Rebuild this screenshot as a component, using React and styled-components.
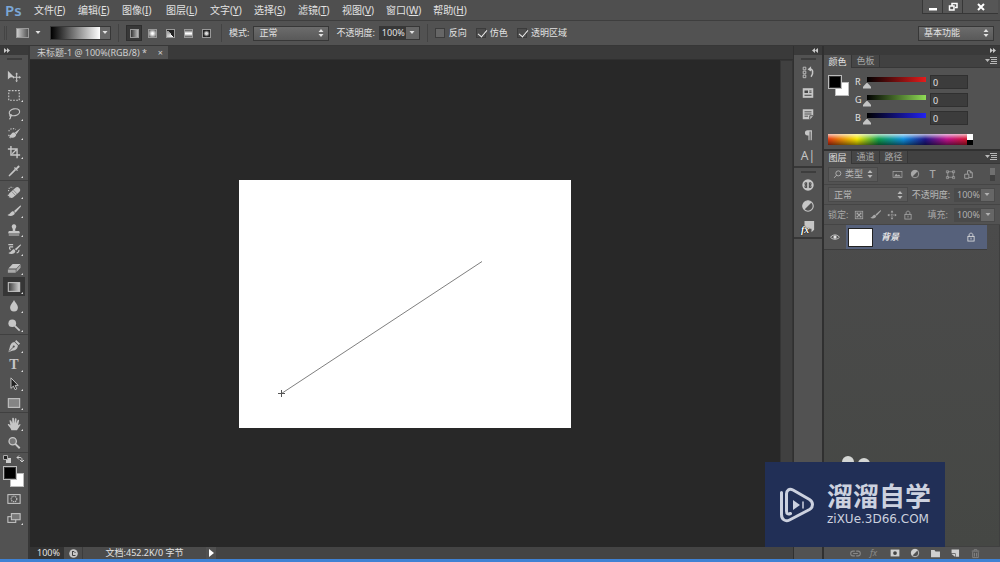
import { useState } from 'react'
import styled, { createGlobalStyle, css } from 'styled-components'

const color = {
	panel: '#525252',
	bar: '#4f4f4f',
	dark: '#3a3a3a',
	edge: '#373737',
	canvas: '#282828',
	text: '#e2e2e2',
	muted: '#a8a8a8',
	icon: '#c6c6c6',
}

const font = `"Noto Sans", "Noto Sans CJK SC", sans-serif`

const menus = [
	['文件', 'F'],
	['编辑', 'E'],
	['图像', 'I'],
	['图层', 'L'],
	['文字', 'Y'],
	['选择', 'S'],
	['滤镜', 'T'],
	['视图', 'V'],
	['窗口', 'W'],
	['帮助', 'H'],
]

const Svg = ({ children, size = 16, ...rest }) => (
	<svg
		width={size}
		height={size}
		viewBox='0 0 16 16'
		fill='none'
		stroke='currentColor'
		strokeWidth='1.3'
		aria-hidden='true'
		{...rest}>
		{children}
	</svg>
)

const solid = { fill: 'currentColor', stroke: 'none' }

const drawings = {
	move: (
		<>
			<path d='M1 2v10l2.600-2.400L8 9z' {...solid} />
			<path d='M11 5.5v8M7 9.5h8' strokeWidth='1.200' />
			<path d='M11 4l1.6 2H9.4zM11 15l1.6-2H9.4zM16 9.500l-2-1.600v3.200zM6 9.500l2-1.600v3.200z' {...solid} />
		</>
	),
	marquee: <rect x='2' y='3' width='12' height='11' strokeDasharray='2 1.500' />,
	lasso: (
		<>
			<ellipse cx='8.500' cy='6' rx='6' ry='3.900' transform='rotate(-12 8.500 6)' />
			<path d='M4.500 8.500c-2 .500-1.500 2.500 0 2s1-2-.500-1.500M4 10.500c.500 1.500 0 2.500-1.200 3.500' />
		</>
	),
	quickSelect: (
		<>
			<path d='M2 6c1-3 5-4 8-2M2 10c0 2 1 3.500 3 4' strokeDasharray='1.500 1.500' />
			<path d='M15.500 2.500l-6.500 5 1.700 2zM8.500 7.500c-3.500-.500-3 2.500-6 3.500 1.500 3.500 8 3 8-1.200z' {...solid} />
		</>
	),
	crop: <path d='M4.500 1v10.500H15M1 4.500h10.500V15M6 10l5-5' strokeWidth='1.600' />,
	eyedropper: (
		<>
			<path d='M10 6.500l-6 6-1.800 1.300L3.500 12l6-6' />
			<path d='M8 4.500l1-1 1.300 1.200L12.500 2c1-.800 2.500.700 1.700 1.700L11.500 6l1 1-1 1z' {...solid} />
		</>
	),
	heal: (
		<>
			<path d='M2 7c-1-3 2-5.500 5-4M1.500 11c0 1.500.500 2.500 1.500 3' strokeDasharray='1.300 1.300' />
			<rect x='1' y='5.300' width='15' height='6.400' rx='3' transform='rotate(-42 8.500 8.500)' {...solid} />
			<path d='M7.300 5.800l4 4.200M5.500 7.500l4 4.200' stroke='#777' strokeWidth='.8' />
		</>
	),
	brush: <path d='M15.500 1.500L8 8l1.700 1.900L16 2.800zM7.200 8.300c-2.900-.200-3 3.200-6.700 4.300 2.700 2.100 8.300 1.200 8.500-2.500z' {...solid} />,
	stamp: <path d='M8 1.500a2.600 2.600 0 0 0-2.200 4C6.600 6.700 6.800 7.500 6.500 9H3c-1 0-1.500.700-1.500 1.500V12h13v-1.500C14.500 9.700 14 9 13 9H9.500c-.300-1.500-.100-2.300.700-3.500A2.600 2.600 0 0 0 8 1.500zM2 13h12v1.200H2z' {...solid} />,
	history: (
		<>
			<path d='M1.500 3h5.500M7 5.500H3M3 5.500c-.500 1.500 0 2.500 1 3.500' />
			<path d='M15.500 2.500L9 8l1.500 1.700L16 3.700zM8.200 8.200c-2.600-.200-2.700 3-6.700 4.300 2.500 2.100 8 1.200 8.100-2.300z' {...solid} />
			<path d='M11 12.500c2-.500 3-2 2.500-3.500' />
		</>
	),
	eraser: (
		<>
			<path d='M6.500 3.500h9l-4.800 5.200H1.500z' {...solid} />
			<path d='M1 9.600h9v3.700H1zM10.800 9.400l4.700-5v3.300l-4.700 5.200z' {...solid} opacity='.75' />
		</>
	),
	gradient: (
		<>
			<defs>
				<linearGradient id='tool-ramp'>
					<stop offset='0' stopColor='#3a3a3a' />
					<stop offset='1' stopColor='#d0d0d0' />
				</linearGradient>
			</defs>
			<rect x='1.500' y='3' width='13' height='10' fill='url(#tool-ramp)' strokeWidth='1.200' />
		</>
	),
	blur: <path d='M8 1c1 2.700 4.500 5.300 4.500 8.500a4.500 4.800 0 0 1-9 0C3.500 6.300 7 3.700 8 1z' {...solid} />,
	dodge: (
		<>
			<circle cx='6' cy='6' r='4.400' {...solid} />
			<path d='M9 9l5.500 5.500' strokeWidth='2' />
		</>
	),
	pen: (
		<>
			<path d='M10.500 1l4.500 4.500-1.800 1.300-4-4zM8.500 3.500L12.500 7.500c-.500 3.500-2 5.500-6.500 6L1.500 15 3 10C3.700 6.200 5.200 4 8.500 3.500z' {...solid} />
			<path d='M2 14.500L7.500 9' stroke='#525252' strokeWidth='1' />
			<circle cx='7.700' cy='8.600' r='1.200' fill='#525252' stroke='none' />
		</>
	),
	select: <path d='M4.500 1v12l2.800-2.600L9.300 14.500l1.900-.900-1.900-4h3.500z' fill='#222' strokeWidth='1.100' />,
	shape: <rect x='1.500' y='3' width='13' height='10' fill='#858585' strokeWidth='1.200' />,
	hand: <path d='M5 15c-.500-2-3-4.500-4.200-6.500 1-.900 1.900-.300 3.200 1.200L2.800 4c1-.800 1.900-.300 2.200.600L6 7.500V1.500c.800-.900 1.700-.700 1.900.200L8.200 7l.900-5.300c.900-.800 1.800-.300 1.800.700L10.600 7.500l1.600-4c.900-.600 1.700 0 1.600.900l-1.200 5.100c1.200-1 2.200-1.500 3-.700-1.600 1.700-2.500 4.300-4.200 6.200z' {...solid} />,
	zoom: (
		<>
			<circle cx='6.500' cy='6' r='4.200' fill='#777' strokeWidth='1.500' />
			<path d='M9.500 9l5 5' strokeWidth='2.200' />
		</>
	),
	mask: (
		<>
			<rect x='1' y='3' width='14' height='10' strokeWidth='1.200' />
			<circle cx='8' cy='8' r='3.200' strokeDasharray='1.500 .8' />
		</>
	),
	screen: (
		<>
			<rect x='1' y='6.500' width='9' height='6.500' strokeWidth='1.200' />
			<rect x='5' y='3' width='10' height='7' fill='#777' strokeWidth='1.200' />
		</>
	),
	historyPanel: (
		<>
			<path d='M2.500 2.500h3v3h-3zM2.500 7h3v3h-3zM2.500 11.500h3v3h-3z' strokeWidth='1' />
			<path d='M9 4.500c5-1 5.500 5 2.500 9' strokeWidth='1.800' />
			<path d='M7.500 5l4-3.500v6z' {...solid} />
		</>
	),
	properties: (
		<>
			<rect x='2' y='2.500' width='12' height='11' {...solid} />
			<path d='M4 5h4v3H4zM9.500 5H12v1.200H9.500zM9.500 7H12v1H9.500zM4 10h8v1H4z' fill='#444' stroke='none' />
		</>
	),
	notes: (
		<>
			<path d='M2 2.500h12v7.500l-3.500 4H2z' {...solid} />
			<path d='M4 5.500h8M4 8h8M4 10.500h4' stroke='#444' strokeWidth='1' />
			<path d='M10 14v-4h4' stroke='#444' strokeWidth='1' />
		</>
	),
	paragraph: <path d='M12.500 2.500H7.500a3 3 0 0 0 0 6H8.500v5.500h1.300v-10h1.200V14h1.300z' {...solid} />,
	library: (
		<>
			<circle cx='8' cy='8' r='6.500' {...solid} />
			<path d='M6 5.500h-1.500v2H6zM11.500 5.500H10v2h1.500zM6 8.800h-1.500v2H6zM11.500 8.800H10v2h1.500zM6.500 5v6.500M9.500 5v6.500' stroke='#444' strokeWidth='1' />
		</>
	),
	adjust: (
		<>
			<circle cx='8' cy='8' r='6' />
			<path d='M12.300 3.700A6 6 0 0 0 3.700 12.300z' {...solid} />
		</>
	),
	styles: <path d='M4 1h11v10L12 14v-4H4z' {...solid} />,
	image: (
		<>
			<rect x='1.500' y='3.500' width='13' height='9' strokeWidth='1' />
			<path d='M3 11l3-4 2.500 2.500L10 8l3 3z' {...solid} />
		</>
	),
	transform: <path d='M4 4h8v8H4zM2 2.500h3v3H2zM11 2.500h3v3h-3zM2 11h3v3H2zM11 11h3v3h-3z' strokeWidth='1' />,
	smart: <path d='M2.500 7.500h6v6h-6zM6.500 7V2.500h4l3 3v7H9M10.500 2.500v3h3' />,
	pixels: (
		<>
			<rect x='2' y='2' width='12' height='12' strokeWidth='1.200' />
			<path d='M4 4h3v3H4zM9 4h3v3H9zM6.500 6.500h3v3h-3zM4 9h3v3H4zM9 9h3v3H9z' {...solid} />
		</>
	),
	position: (
		<>
			<path d='M8 3v10M3 8h10' strokeDasharray='2 1' />
			<path d='M8 .500l2.200 3H5.800zM8 15.500l2.200-3H5.800zM15.500 8l-3-2.200v4.400zM.500 8l3-2.200v4.400z' {...solid} />
		</>
	),
	lock: (
		<>
			<rect x='3' y='7' width='10' height='7.500' />
			<path d='M5 7V4.500c0-3.500 6-3.500 6 0V7M8 9v3' />
		</>
	),
	eye: (
		<>
			<path d='M1 8.500C3.500 3.500 12.500 3.500 15 8.500 12 12.500 4 12.500 1 8.500z' />
			<circle cx='8' cy='8' r='2.600' {...solid} />
		</>
	),
	search: (
		<>
			<circle cx='9.500' cy='6' r='4.500' strokeWidth='1.500' />
			<path d='M6.500 9l-4.500 5' strokeWidth='1.500' />
		</>
	),
	link: <path d='M7 4.500H4.500a3.500 3.500 0 0 0 0 7H7M9 4.500h2.500a3.500 3.500 0 0 1 0 7H9M4.500 8h7' strokeWidth='1.600' />,
	addMask: (
		<>
			<rect x='1' y='2.500' width='14' height='11' {...solid} />
			<circle cx='8' cy='8' r='3' fill='#444' stroke='none' />
		</>
	),
	folder: <path d='M1.500 3h5l1.500 2h6.500v8.500h-13z' {...solid} />,
	newLayer: (
		<>
			<path d='M2.500 2.500h12V14H9V8.500H2.500z' {...solid} />
			<path d='M2.500 9.500H8V14z' {...solid} />
		</>
	),
	trash: <path d='M2.500 4.500h11M6 4V2.500h4V4M4 6v8h8V6M6.500 7v5.500M9.500 7v5.500' />,
}

const Icon = ({ name, size }) => <Svg size={size}>{drawings[name]}</Svg>

const toolGroups = [
	[
		['移动', 'move', true],
		['选框', 'marquee'],
		['套索', 'lasso'],
		['快速选择', 'quickSelect'],
		['裁剪', 'crop'],
		['吸管', 'eyedropper'],
	],
	[
		['修复画笔', 'heal'],
		['画笔', 'brush'],
		['图章', 'stamp'],
		['历史画笔', 'history'],
		['橡皮擦', 'eraser'],
		['渐变', 'gradient'],
		['模糊', 'blur'],
		['减淡', 'dodge'],
	],
	[
		['钢笔', 'pen'],
		['文字', 'type'],
		['路径选择', 'select'],
		['矩形', 'shape'],
	],
	[
		['抓手', 'hand'],
		['缩放', 'zoom', true],
	],
]

const gradientTypes = [
	['线性', 'linear-gradient(90deg, #333, #bbb)'],
	['径向', 'radial-gradient(#fff 15%, #555)'],
	['角度', 'conic-gradient(from 135deg, #fff, #999 50%, #222 50%, #222)'],
	['对称', 'linear-gradient(#555, #fff 45%, #fff 55%, #555)'],
	['菱形', 'radial-gradient(#ddd 20%, #222 65%)'],
]

const channels = [
	['R', '#e51c1c'],
	['G', '#8fdc55'],
	['B', '#2222f0'],
]

const UpDown = () => (
	<svg width='6' height='8' viewBox='0 0 6 8' aria-hidden='true'>
		<path d='M3 0l2.500 3h-5zM3 8l2.500-3h-5z' fill='currentColor' />
	</svg>
)

const Caret = () => (
	<svg width='6' height='4' viewBox='0 0 6 4' aria-hidden='true'>
		<path d='M.500 0h5L3 3z' fill='currentColor' />
	</svg>
)

const DropDown = ({ label, value, width, dim, icon }) => (
	<SelectBox $width={width} $dim={dim}>
		{icon}
		<select aria-label={label} defaultValue={value}>
			<option>{value}</option>
		</select>
		<UpDown />
	</SelectBox>
)

const Percent = ({ id, dim }) => (
	<PercentBox $dim={dim}>
		<input id={id} defaultValue='100%' />
		<button type='button' aria-label='调整'>
			<Caret />
		</button>
	</PercentBox>
)

const PanelMenu = () => (
	<MenuButton type='button' aria-label='面板菜单'>
		<svg width='12' height='8' viewBox='0 0 12 8' aria-hidden='true'>
			<path d='M0 2h5L2.500 5zM5 0h7v1H5zM6 2h6v1H6zM6 4h6v1H6zM5 6h7v1H5z' fill='currentColor' />
		</svg>
	</MenuButton>
)

const TopBar = () => (
	<MenuBar>
		<Logo>Ps</Logo>
		<MenuList>
			{menus.map(([name, key]) => (
				<button type='button' key={key}>
					{name}(<u>{key}</u>)
				</button>
			))}
		</MenuList>
		<WindowButtons>
			<button type='button' aria-label='最小化'>
				<svg width='10' height='10' viewBox='0 0 10 10'>
					<path d='M1 6h8v2.500H1z' fill='#fff' />
				</svg>
			</button>
			<button type='button' aria-label='还原'>
				<svg width='10' height='10' viewBox='0 0 10 10' fill='none' stroke='#fff' strokeWidth='1.500'>
					<path d='M4 3.500V1.500h5v4H7M1.500 4h4.500v4H1.500z' />
				</svg>
			</button>
			<button type='button' aria-label='关闭'>
				<svg width='10' height='10' viewBox='0 0 10 10' stroke='#fff' strokeWidth='2'>
					<path d='M2 2l6 6M8 2L2 8' />
				</svg>
			</button>
		</WindowButtons>
	</MenuBar>
)

const Options = () => {
	const [type, setType] = useState('线性')

	return (
		<OptionsBar>
			<Grip />
			<PresetButton type='button' aria-label='工具预设'>
				<i />
				<Caret />
			</PresetButton>
			<RampPicker>
				<span />
				<button type='button' aria-label='渐变拾色器'>
					<Caret />
				</button>
			</RampPicker>
			<Divider />
			<TypeList>
				{gradientTypes.map(([name, fill]) => (
					<TypeButton
						type='button'
						key={name}
						aria-label={name}
						$active={type === name}
						$fill={fill}
						onClick={() => setType(name)}>
						<i />
					</TypeButton>
				))}
			</TypeList>
			<Divider />
			<Field>
				模式:
				<DropDown label='模式' value='正常' width={76} />
			</Field>
			<Field>
				<label htmlFor='opacity'>不透明度:</label>
				<Percent id='opacity' />
			</Field>
			<Divider />
			<CheckList>
				<Check>
					<input type='checkbox' />
					反向
				</Check>
				<Check>
					<input type='checkbox' defaultChecked />
					仿色
				</Check>
				<Check>
					<input type='checkbox' defaultChecked />
					透明区域
				</Check>
			</CheckList>
			<Workspace>
				<DropDown label='工作区' value='基本功能' width={76} />
			</Workspace>
		</OptionsBar>
	)
}

const Tools = () => {
	const [tool, setTool] = useState('gradient')

	return (
		<ToolColumn>
			<Collapse>
				<Chevrons right />
			</Collapse>
			<ToolBox>
				<Handle />
				{toolGroups.map((group) => (
					<ToolGroup key={group[0][1]}>
						{group.map(([label, name, single]) => (
							<ToolButton
								type='button'
								key={name}
								aria-label={label}
								$active={tool === name}
								$single={single}
								onClick={() => setTool(name)}>
								{name === 'type' ? <Letter>T</Letter> : <Icon name={name} size={14} />}
							</ToolButton>
						))}
					</ToolGroup>
				))}
				<SwatchTools>
					<svg width='8' height='8' viewBox='0 0 8 8'>
						<path d='M3 3h5v5H3z' fill='#ccc' />
						<path d='M.500.500h4v4h-4z' fill='#222' stroke='#aaa' />
					</svg>
					<svg width='8' height='8' viewBox='0 0 8 8' fill='none' stroke='#ccc'>
						<path d='M1 2.500h3c2 0 2 1 2 4M3 .500l-2 2 2 2M4 5l2 2 2-2' />
					</svg>
				</SwatchTools>
				<Swatches>
					<i />
					<i />
				</Swatches>
				<ToolButton type='button' aria-label='快速蒙版' $single>
					<Icon name='mask' size={14} />
				</ToolButton>
				<ToolButton type='button' aria-label='屏幕模式'>
					<Icon name='screen' size={14} />
				</ToolButton>
			</ToolBox>
		</ToolColumn>
	)
}

const Chevrons = ({ right }) => (
	<svg width='6' height='5' viewBox='0 0 6 5' fill='#c8c8c8' aria-hidden='true'>
		{right ? <path d='M0 0l3 2.500L0 5zM3 0l3 2.500L3 5z' /> : <path d='M3 0L0 2.500 3 5zM6 0L3 2.500 6 5z' />}
	</svg>
)

const Document = () => (
	<DocumentArea>
		<DocumentTabs>
			<DocumentTab>
				未标题-1 @ 100%(RGB/8) *
				<button type='button' aria-label='关闭文档'>×</button>
			</DocumentTab>
		</DocumentTabs>
		<Viewport>
			<Stage>
				<Artboard width='332' height='248' viewBox='0 0 332 248'>
					<path d='M42.500 213.500L243 81.500' stroke='#707070' strokeWidth='.9' />
					<path d='M39 213.500h7M42.500 210v7' stroke='#555' strokeWidth='1' />
				</Artboard>
			</Stage>
			<ScrollTrack />
		</Viewport>
		<StatusBar>
			<span>100%</span>
			<StatusIcon>
				<svg width='9' height='9' viewBox='0 0 9 9'>
					<circle cx='4.500' cy='4.500' r='4.300' fill='#c8c8c8' />
					<path d='M3 2.500h2l1.500 1.500M3.500 2.500v4h3' stroke='#444' fill='none' />
				</svg>
			</StatusIcon>
			<StatusText>文档:452.2K/0 字节</StatusText>
			<button type='button' aria-label='状态选项'>
				<svg width='6' height='8' viewBox='0 0 6 8'>
					<path d='M0 0l5 4-5 4z' fill='#fff' />
				</svg>
			</button>
		</StatusBar>
	</DocumentArea>
)

const Dock = () => (
	<DockColumn>
		<Collapse $end>
			<Chevrons />
		</Collapse>
		<DockGroup>
			<Handle />
			{['historyPanel', 'properties', 'notes', 'paragraph'].map((name) => (
				<button type='button' key={name} aria-label={name}>
					<Icon name={name} size={14} />
				</button>
			))}
			<button type='button'>A|</button>
		</DockGroup>
		<DockGroup>
			<Handle />
			<button type='button' aria-label='库'>
				<Icon name='library' size={14} />
			</button>
			<button type='button' aria-label='调整'>
				<Icon name='adjust' size={14} />
			</button>
			<button type='button' aria-label='样式'>
				<Fx>
					<Icon name='styles' size={14} />
					<em>fx</em>
				</Fx>
			</button>
		</DockGroup>
	</DockColumn>
)

const ColorPanel = () => (
	<Panel>
		<Tabs>
			<Tab type='button' $active>颜色</Tab>
			<Tab type='button'>色板</Tab>
			<PanelMenu />
		</Tabs>
		<ColorBody>
			<Swatches>
				<i />
				<i />
			</Swatches>
			<Channels>
				{channels.map(([name, tint]) => (
					<Channel key={name}>
						<label htmlFor={name}>{name}</label>
						<Slider id={name} type='range' max='255' defaultValue='0' $tint={tint} />
						<NumberField aria-label={`${name} 值`} defaultValue='0' />
					</Channel>
				))}
			</Channels>
			<Spectrum>
				<i />
			</Spectrum>
		</ColorBody>
	</Panel>
)

const LayersPanel = () => (
	<Panel $grow>
		<Tabs>
			<Tab type='button' $active>图层</Tab>
			<Tab type='button'>通道</Tab>
			<Tab type='button'>路径</Tab>
			<PanelMenu />
		</Tabs>
		<FilterRow>
			<DropDown label='类型' value='类型' width={50} dim icon={<Icon name='search' size={9} />} />
			<FilterIcons>
				<Icon name='image' size={11} />
				<Icon name='adjust' size={10} />
				<b>T</b>
				<Icon name='transform' size={11} />
				<Icon name='smart' size={11} />
			</FilterIcons>
			<Toggle />
		</FilterRow>
		<BlendRow>
			<DropDown label='混合模式' value='正常' width={80} dim />
			<label htmlFor='layer-opacity'>不透明度:</label>
			<Percent id='layer-opacity' dim />
		</BlendRow>
		<LockRow>
			<span>锁定:</span>
			<Icon name='pixels' size={10} />
			<Icon name='brush' size={11} />
			<Icon name='position' size={10} />
			<Icon name='lock' size={10} />
			<label htmlFor='fill'>填充:</label>
			<Percent id='fill' dim />
		</LockRow>
		<LayerList>
			<Layer>
				<Visibility type='button' aria-label='可见性'>
					<Icon name='eye' size={10} />
				</Visibility>
				<LayerBody>
					<Thumb />
					<em>背景</em>
					<Icon name='lock' size={10} />
				</LayerBody>
			</Layer>
		</LayerList>
		<PanelFooter>
			<button type='button' aria-label='链接' disabled><Icon name='link' size={11} /></button>
			<button type='button' disabled><em>fx</em></button>
			<button type='button' aria-label='添加蒙版'><Icon name='addMask' size={10} /></button>
			<button type='button' aria-label='调整图层'><Icon name='adjust' size={10} /></button>
			<button type='button' aria-label='新建组'><Icon name='folder' size={11} /></button>
			<button type='button' aria-label='新建图层'><Icon name='newLayer' size={10} /></button>
			<button type='button' aria-label='删除' disabled><Icon name='trash' size={11} /></button>
		</PanelFooter>
	</Panel>
)

const Watermark = () => (
	<Brand>
		<Bumps width='30' height='6' viewBox='0 0 30 6'>
			<circle cx='7' cy='6' r='6' fill='#d4d6d4' />
			<circle cx='23' cy='8' r='6' fill='#d4d6d4' />
		</Bumps>
		<svg width='36' height='36' viewBox='0 0 36 36' fill='none' stroke='#ccd1df' strokeWidth='3' strokeLinecap='round'>
			<path d='M2.500 5.500v22c0 5 4 7.500 8 5.500l20-10.500c4-2.500 4-7.500 0-10L14 3C10 1 7.500 3.500 7.500 7v17c0 3 1.500 3.500 4 2.500' />
			<path d='M14 13l7 5-7 5z' fill='#ccd1df' stroke='none' />
			<path d='M24 15v6' strokeWidth='1.500' />
		</svg>
		<div>
			<strong>溜溜自学</strong>
			<span>ziXUe.3D66.COM</span>
		</div>
	</Brand>
)

const App = () => (
	<>
		<GlobalStyle />
		<Page>
			<TopBar />
			<Options />
			<Workbench>
				<Tools />
				<Document />
				<Dock />
				<Side>
					<Collapse $end>
						<Chevrons right />
					</Collapse>
					<ColorPanel />
					<LayersPanel />
				</Side>
			</Workbench>
			<Taskbar />
			<Watermark />
		</Page>
	</>
)

const GlobalStyle = createGlobalStyle`
	* {
		box-sizing: border-box;
	}

	body {
		margin: 0;
		background: ${color.dark};
	}

	button, input, select {
		font: inherit;
		color: inherit;
		margin: 0;
		padding: 0;
		border: 0;
		background: none;
		border-radius: 0;
	}

	svg {
		flex: none;
		display: block;
	}
`

const Page = styled.div`
	position: relative;
	display: flex;
	flex-direction: column;
	height: 100vh;
	overflow: hidden;
	font: 9px/12px ${font};
	color: ${color.text};
`

const MenuBar = styled.header`
	display: flex;
	align-items: center;
	height: 21px;
	background: ${color.bar};
	border-bottom: 1px solid #3e3e3e;
`

const Logo = styled.span`
	width: 34px;
	padding-left: 5px;
	font: 600 15px/20px "Noto Sans", sans-serif;
	color: #7ba7d6;
`

const MenuList = styled.nav`
	display: flex;
	gap: 12px;
	font-size: 10px;
	line-height: 16px;

	button {
		min-width: 32px;
		text-align: left;
		white-space: nowrap;
	}
`

const WindowButtons = styled.div`
	display: flex;
	align-self: flex-start;
	margin-left: auto;
	padding-right: 2px;

	button {
		display: flex;
		align-items: center;
		justify-content: center;
		width: 20px;
		height: 14px;
		border: 1px solid ${color.edge};
		border-width: 0 0 1px 1px;
		background: #565656;
	}

	button:last-child {
		width: 36px;
	}
`

const OptionsBar = styled.div`
	display: flex;
	align-items: center;
	height: 25px;
	padding: 0 6px 0 4px;
	background: ${color.panel};
	border-bottom: 1px solid ${color.edge};
	white-space: nowrap;
`

const Grip = styled.i`
	width: 3px;
	height: 14px;
	border: 1px solid #444;
	border-width: 0 1px;
`

const PresetButton = styled.button`
	display: flex;
	align-items: center;
	gap: 6px;
	margin: 0 9px;

	i {
		width: 13px;
		height: 10px;
		border: 1px solid #999;
		background: linear-gradient(90deg, #ccc, #555);
	}
`

const Divider = styled.i`
	width: 1px;
	height: 18px;
	margin: 0 7px;
	background: #434343;
`

const RampPicker = styled.div`
	display: flex;
	height: 14px;
	border: 1px solid ${color.edge};

	span {
		width: 49px;
		background: linear-gradient(90deg, #000, #fff);
	}

	button {
		display: flex;
		align-items: center;
		justify-content: center;
		width: 10px;
		background: #686868;
	}
`

const TypeList = styled.div`
	display: flex;
	gap: 2px;
`

const TypeButton = styled.button`
	display: flex;
	align-items: center;
	justify-content: center;
	width: 16px;
	height: 16px;
	${({ $active }) =>
		$active &&
		css`
			background: #383838;
			border: 1px solid #2e2e2e;
		`}

	i {
		width: 9px;
		height: 9px;
		border: 1px solid #999;
		background: ${({ $fill }) => $fill};
	}
`

const Field = styled.div`
	display: flex;
	align-items: center;
	gap: 4px;
	margin-right: 7px;

	& + i {
		margin-left: 0;
	}
`

const SelectBox = styled.span`
	display: flex;
	align-items: center;
	width: ${({ $width }) => $width}px;
	height: 15px;
	padding: 0 4px;
	border: 1px solid ${({ $dim }) => ($dim ? '#494949' : color.edge)};
	background: ${({ $dim }) => ($dim ? '#5a5a5a' : 'linear-gradient(#6c6c6c, #595959)')};
	color: ${({ $dim }) => ($dim ? '#b8b8b8' : color.text)};

	select {
		appearance: none;
		flex: 1;
		min-width: 0;
		padding-left: 1px;
		line-height: 12px;
	}

	svg + select {
		padding-left: 3px;
	}
`

const PercentBox = styled.span`
	display: flex;
	width: 41px;
	height: 14px;
	border: 1px solid ${({ $dim }) => ($dim ? '#4a4a4a' : color.edge)};
	color: ${({ $dim }) => ($dim ? '#b0b0b0' : color.text)};

	input {
		flex: 1;
		min-width: 0;
		padding-left: 2px;
		background: ${({ $dim }) => ($dim ? '#4a4a4a' : '#373737')};
	}

	button {
		display: flex;
		align-items: center;
		justify-content: center;
		width: 13px;
		background: #666;
	}
`

const CheckList = styled.div`
	display: flex;
	gap: 9px;
`

const Check = styled.label`
	display: flex;
	align-items: center;
	gap: 4px;

	input {
		appearance: none;
		width: 10px;
		height: 10px;
		border: 1px solid #3c3c3c;
		background: #666;
	}

	input:checked {
		background: #4c4c4c;
	}

	input:checked::before {
		content: '';
		display: block;
		width: 4px;
		height: 8px;
		margin: -1px 0 0 3px;
		border: solid #eee;
		border-width: 0 1px 1px 0;
		transform: rotate(40deg);
	}
`

const Workspace = styled.div`
	margin-left: auto;
`

const Workbench = styled.main`
	display: flex;
	flex: 1;
	min-height: 0;
`

const Collapse = styled.div`
	display: flex;
	align-items: center;
	justify-content: ${({ $end }) => ($end ? 'flex-end' : 'flex-start')};
	height: 9px;
	padding: 0 4px;
	background: ${color.dark};
`

const ToolColumn = styled.aside`
	display: flex;
	flex-direction: column;
	width: 30px;
	border-right: 2px solid ${color.edge};
`

const ToolBox = styled.div`
	flex: 1;
	background: ${color.panel};
`

const Handle = styled.i`
	display: block;
	width: 15px;
	height: 2px;
	margin: 3px auto 1px;
	border: 1px solid #3d3d3d;
	border-width: 1px 0;
`

const ToolGroup = styled.div`
	padding-top: 1px;
	border-bottom: 1px solid #404040;

	${Handle} + & {
		padding-top: 5px;
	}
`

const ToolButton = styled.button`
	position: relative;
	display: flex;
	align-items: center;
	justify-content: center;
	width: 22px;
	height: 19px;
	margin: 0 3px;
	color: ${color.icon};
	background: ${({ $active }) => ($active ? '#363636' : 'none')};

	&::after {
		content: '';
		display: ${({ $single }) => ($single ? 'none' : 'block')};
		position: absolute;
		right: 2px;
		bottom: 2px;
		border: 1px solid #ddd;
		border-top-color: transparent;
		border-left-color: transparent;
	}
`

const Letter = styled.span`
	font: 700 14px/16px "Liberation Serif", serif;
`

const SwatchTools = styled.div`
	display: flex;
	gap: 5px;
	padding: 2px 3px 3px;
`

/* foreground square on top of the background square */
const Swatches = styled.div`
	display: grid;
	grid-template: 7px 7px 7px / 7px 7px 7px;
	margin: 0 0 2px 3px;

	i {
		grid-area: 1 / 1 / 3 / 3;
		z-index: 1;
		background: #000;
		border: 1px solid #bbb;
		outline: 1px solid #333;
		outline-offset: -2px;
	}

	i + i {
		grid-area: 2 / 2 / 4 / 4;
		z-index: 0;
		background: #fff;
		outline: 0;
	}
`

const DocumentArea = styled.section`
	display: flex;
	flex: 1;
	flex-direction: column;
	min-width: 0;
`

const DocumentTabs = styled.div`
	display: flex;
	height: 14px;
	background: ${color.dark};
	border-bottom: 1px solid #303030;
`

const DocumentTab = styled.div`
	display: flex;
	align-items: center;
	justify-content: space-between;
	width: 138px;
	padding: 0 5px 0 7px;
	background: ${color.panel};
	color: #d0d0d0;
	white-space: nowrap;
`

const Viewport = styled.div`
	display: flex;
	flex: 1;
	min-height: 0;
`

const Stage = styled.div`
	display: flex;
	flex: 1;
	align-items: center;
	justify-content: center;
	background: ${color.canvas};
`

const Artboard = styled.svg`
	background: #fff;
`

const ScrollTrack = styled.div`
	width: 13px;
	background: #404040;
	border: 1px solid #353535;
`

const StatusBar = styled.footer`
	display: flex;
	height: 12px;
	background: #444;

	> span:first-child {
		width: 34px;
		padding-left: 7px;
		background: #333;
	}

	button {
		display: flex;
		align-items: center;
		padding-left: 3px;
		width: 10px;
		background: #515151;
	}
`

const StatusIcon = styled.span`
	display: flex;
	align-items: center;
	justify-content: center;
	width: 18px;
	background: #4b4b4b;
`

const StatusText = styled.span`
	width: 124px;
	text-align: center;
	background: #4b4b4b;
	border-left: 1px solid #3c3c3c;
`

const DockColumn = styled.aside`
	display: flex;
	flex-direction: column;
	width: 31px;
	border: 1px solid #303030;
	border-width: 0 2px 0 1px;
	background: ${color.panel};
`

const DockGroup = styled.div`
	border-bottom: 2px solid ${color.edge};

	button {
		display: flex;
		align-items: center;
		justify-content: center;
		width: 100%;
		height: 21px;
		color: ${color.icon};
		font-size: 12px;
	}
`

const Fx = styled.span`
	position: relative;

	em {
		position: absolute;
		left: 0;
		bottom: 0;
		font: italic 700 10px/9px "Liberation Serif", serif;
		color: #fff;
		text-shadow: 0 0 1px #000, 0 0 1px #000;
	}
`

const Side = styled.aside`
	display: flex;
	flex-direction: column;
	width: 176px;
`

const Panel = styled.section`
	display: flex;
	flex-direction: column;
	flex: ${({ $grow }) => ($grow ? 1 : 'none')};
	min-height: 0;
	background: ${color.panel};
	border-bottom: ${({ $grow }) => ($grow ? 0 : 2)}px solid #303030;
`

const Tabs = styled.div`
	display: flex;
	height: 13px;
	background: #414141;
	border-bottom: 1px solid ${color.edge};
`

const Tab = styled.button`
	width: 28px;
	height: ${({ $active }) => ($active ? 13 : 12)}px;
	line-height: 12px;
	border-right: 1px solid #363636;
	color: ${({ $active }) => ($active ? color.text : color.muted)};
	background: ${({ $active }) => ($active ? color.panel : '#464646')};
`

const MenuButton = styled.button`
	display: flex;
	align-items: center;
	margin: 0 3px 0 auto;
	color: #b8b8b8;
`

const ColorBody = styled.div`
	display: grid;
	grid-template-columns: 31px 1fr;
	row-gap: 9px;
	padding: 7px 0 4px;

	${Swatches} {
		margin-left: 4px;
	}
`

const Channels = styled.div`
	display: grid;
	row-gap: 4px;
`

const Channel = styled.div`
	display: flex;
	align-items: center;
	height: 14px;

	label {
		width: 8px;
	}
`

const Slider = styled.input`
	appearance: none;
	width: 67px;
	height: 13px;
	background: linear-gradient(90deg, #000, ${({ $tint }) => $tint}) 4px 1px / 59px 5px no-repeat;

	&::-webkit-slider-thumb {
		appearance: none;
		width: 8px;
		height: 6px;
		margin-top: 7px;
		background: #c4c4c4;
		clip-path: polygon(50% 0, 100% 70%, 100% 100%, 0 100%, 0 70%);
	}
`

const NumberField = styled.input`
	width: 38px;
	height: 14px;
	padding-left: 2px;
	border: 1px solid #303030;
	background: #3c3c3c;
`

const Spectrum = styled.div`
	display: flex;
	justify-content: flex-end;
	grid-column: 1 / 3;
	width: 145px;
	height: 11px;
	margin-left: 4px;
	background:
		linear-gradient(rgba(255, 255, 255, 0.7), transparent 45%, rgba(0, 0, 0, 0.5)),
		linear-gradient(90deg, #e33a12, #f5e800 20%, #10a050 35%, #1090e0 52%, #20188c 67%, #c0148c 82%, #e01818);

	i {
		width: 6px;
		background: linear-gradient(#fff 50%, #000 50%);
	}
`

const FilterRow = styled.div`
	display: flex;
	align-items: center;
	height: 21px;
	padding: 0 5px 0 4px;
	border-bottom: 1px solid #454545;
	color: ${color.muted};
`

const FilterIcons = styled.div`
	display: flex;
	align-items: center;
	gap: 7px;
	margin-left: 14px;

	b {
		width: 11px;
		font-size: 11px;
		font-weight: 500;
		text-align: center;
	}
`

const Toggle = styled.i`
	width: 5px;
	height: 13px;
	margin-left: auto;
	background: linear-gradient(#707070 50%, #404040 50%);
`

const BlendRow = styled.div`
	display: flex;
	align-items: center;
	justify-content: space-between;
	height: 20px;
	padding: 0 5px 0 4px;
	border-bottom: 1px solid #454545;
	color: #b8b8b8;
`

const LockRow = styled(BlendRow)`
	justify-content: flex-start;
	gap: 6px;
	color: ${color.muted};

	label {
		margin-left: auto;
	}
`

const LayerList = styled.div`
	flex: 1;
	padding-right: 12px;
	background: linear-gradient(#4b4b4b, #454744);
	border-right: 1px solid #3f3f3f;
`

const Layer = styled.div`
	display: flex;
	height: 25px;
	border-bottom: 1px solid #3c3c3c;
`

const Visibility = styled.button`
	width: 22px;
	padding-left: 6px;
	background: ${color.panel};
`

const LayerBody = styled.div`
	display: flex;
	flex: 1;
	align-items: center;
	padding: 0 11px 0 2px;
	background: #56617b;

	em {
		flex: 1;
		margin-left: 8px;
		font-weight: 700;
	}
`

const Thumb = styled.i`
	width: 25px;
	height: 19px;
	border: 1px solid #222;
	background: #fff;
`

const PanelFooter = styled.footer`
	display: flex;
	align-items: center;
	gap: 9px;
	height: 13px;
	padding-left: 26px;
	background: ${color.panel};
	border-top: 1px solid #404040;

	button {
		display: flex;
		width: 11px;
		color: #d0d0d0;
	}

	button:disabled {
		color: #888;
	}
`

const Taskbar = styled.div`
	height: 3px;
	background: #3f82d4;
`

const Brand = styled.div`
	position: absolute;
	right: 55px;
	bottom: 15px;
	display: flex;
	align-items: center;
	gap: 12px;
	width: 180px;
	height: 85px;
	padding-left: 14px;
	background: #212f56;
	color: #ccd1df;

	strong, span {
		display: block;
		white-space: nowrap;
	}

	strong {
		font: 700 26px/28px "Liberation Sans", "Noto Sans CJK SC", sans-serif;
	}

	span {
		font: 12px/16px "DejaVu Sans", sans-serif;
	}
`

const Bumps = styled.svg`
	position: absolute;
	left: 76px;
	bottom: 100%;
`

export default App
